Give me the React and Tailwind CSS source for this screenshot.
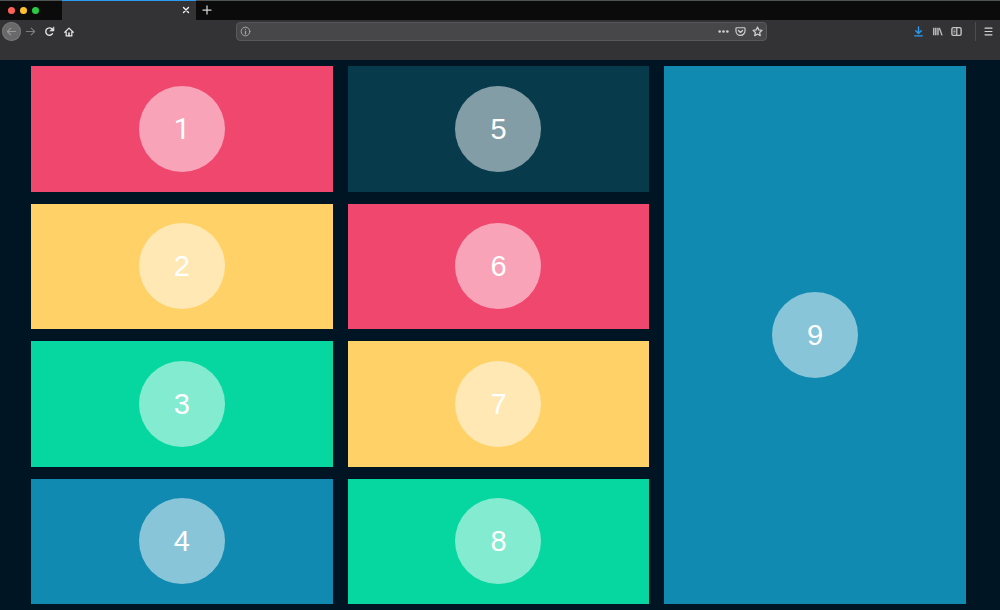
import React from 'react';

const tiles = [
  { n: 1, color: 'bg-[#f0476f]', font: "font-['Roboto',sans-serif]" },
  { n: 2, color: 'bg-[#ffd166]' },
  { n: 3, color: 'bg-[#06d7a0]' },
  { n: 4, color: 'bg-[#118ab2]' },
  { n: 5, color: 'bg-[#073b4c]' },
  { n: 6, color: 'bg-[#f0476f]' },
  { n: 7, color: 'bg-[#ffd166]' },
  { n: 8, color: 'bg-[#06d7a0]' },
  { n: 9, color: 'bg-[#118ab2]', span: 'row-span-4' },
];

function Icon({ children, className = 'size-[11px]' }) {
  return (
    <svg
      viewBox="0 0 16 16"
      className={className}
      fill="none"
      stroke="currentColor"
      strokeWidth="2"
      strokeLinecap="round"
      strokeLinejoin="round"
      aria-hidden="true"
    >
      {children}
    </svg>
  );
}

function ToolButton({ label, className = 'text-[#d4d4d5]', children }) {
  return (
    <button
      type="button"
      aria-label={label}
      className={`flex size-[19px] shrink-0 items-center justify-center rounded-full ${className}`}
    >
      {children}
    </button>
  );
}

function TabStrip() {
  return (
    <div className="flex h-5 border-t border-[#505354] bg-[#0b0b0b]">
      <div className="flex w-[62px] shrink-0 items-center gap-[5px] pb-px pl-2">
        <button type="button" aria-label="Close window" className="size-[7px] rounded-full bg-[#ff6159]" />
        <button type="button" aria-label="Minimize window" className="size-[7px] rounded-full bg-[#ffc12f]" />
        <button type="button" aria-label="Zoom window" className="size-[7px] rounded-full bg-[#2acb42]" />
      </div>
      <div className="-mt-px flex w-[134px] shrink-0 items-center justify-end border-t border-[#2b9cf2] bg-[#333335] pb-px pr-[5px]">
        <button type="button" aria-label="Close tab" className="flex size-[10px] items-center justify-center text-[#f2f2f2]">
          <Icon className="size-2">
            <path d="M3 3l10 10M13 3L3 13" strokeWidth="2.8" />
          </Icon>
        </button>
      </div>
      <button type="button" aria-label="New tab" className="flex w-[21px] items-center justify-center pb-px text-[#d4d4d5]">
        <Icon className="size-[10px]">
          <path d="M8 1.5v13M1.5 8h13" />
        </Icon>
      </button>
    </div>
  );
}

function Toolbar() {
  return (
    <div className="flex h-10 items-start bg-[#333335] pt-0.5">
      <div className="flex h-[19px] w-full items-center pl-0.5 pr-0.5">
        <div className="flex shrink-0 pr-4">
          <ToolButton label="Back" className="bg-[#69696a] text-[#98989a] ring-1 ring-inset ring-[#757576]">
            <Icon>
              <path d="M14 8H2M7 3L2 8l5 5" strokeWidth="1.6" />
            </Icon>
          </ToolButton>
          <ToolButton label="Forward" className="text-[#7d7d7f]">
            <Icon>
              <path d="M2 8h12M9 3l5 5-5 5" strokeWidth="1.6" />
            </Icon>
          </ToolButton>
          <ToolButton label="Reload" className="text-[#e4e4e5]">
            <Icon>
              <path d="M12.4 11.2A5.4 5.4 0 1 1 11.8 4.2" />
              <path d="M14.4 1.8v5.4H9z" fill="currentColor" strokeWidth="1" />
            </Icon>
          </ToolButton>
          <ToolButton label="Home" className="text-[#e4e4e5]">
            <Icon className="size-[10px]">
              <path d="M1.3 8.5L8 1.8l6.7 6.7M3.5 8v6.3h9V8" />
              <path d="M8 9.5V14" strokeWidth="2.6" />
            </Icon>
          </ToolButton>
        </div>

        <div className="mx-auto flex h-[19px] w-full max-w-[531px] items-center rounded-sm border border-[#59595b] bg-[#474749] pl-[3px] pr-[3px] text-[#cfcfd0]">
          <Icon className="size-[11px] shrink-0 text-[#a9a9aa]">
            <circle cx="8" cy="8" r="6.3" strokeWidth="1.4" />
            <path d="M8 7.7v3.6M8 4.8v.1" strokeWidth="1.8" />
          </Icon>
          <input
            type="text"
            aria-label="Address"
            className="h-full min-w-0 flex-1 bg-transparent px-2 font-['Liberation_Sans',sans-serif] text-[11px] text-white outline-none"
          />
          <div className="flex shrink-0 items-center gap-1.5">
            <button type="button" aria-label="Page actions">
              <Icon>
                <g fill="currentColor" stroke="none">
                  <circle cx="2.4" cy="8" r="1.9" />
                  <circle cx="8" cy="8" r="1.9" />
                  <circle cx="13.6" cy="8" r="1.9" />
                </g>
              </Icon>
            </button>
            <button type="button" aria-label="Save to Pocket">
              <Icon>
                <path d="M2.6 2.5h10.8a1.2 1.2 0 0 1 1.2 1.2V7a6.6 6.6 0 0 1-13.2 0V3.7a1.2 1.2 0 0 1 1.2-1.2z" strokeWidth="1.7" />
                <path d="M5 6.5l3 2.8 3-2.8" />
              </Icon>
            </button>
            <button type="button" aria-label="Bookmark this page">
              <Icon>
                <path d="M8 1.6l1.9 4.2 4.6.5-3.4 3.1.9 4.6L8 11.7 4 14l.9-4.6-3.4-3.1 4.6-.5z" strokeWidth="1.8" />
              </Icon>
            </button>
          </div>
        </div>

        <div className="flex shrink-0 items-center">
          <ToolButton label="Downloads" className="text-[#2b9cf2]">
            <Icon>
              <path d="M8 1.5v9M4 7l4 4 4-4M2.5 14.3h11" />
            </Icon>
          </ToolButton>
          <ToolButton label="Library" className="text-[#b9b9ba]">
            <Icon>
              <path d="M2.5 2.5v11M5.5 2.5v11M8.7 2.5v11" strokeLinecap="butt" strokeWidth="2.2" />
              <path d="M11 3.5l3.4 9.5" />
            </Icon>
          </ToolButton>
          <ToolButton label="Sidebars" className="text-[#c5c5c6]">
            <Icon>
              <rect x="1.3" y="2.3" width="13.4" height="11.4" rx="2" />
              <path d="M8.4 3v10" strokeWidth="1.8" />
              <path d="M4 5.8h2M4 8h2M4 10.2h2" strokeWidth="1.1" />
            </Icon>
          </ToolButton>
          <div className="ml-[9px] mr-[3px] h-[19px] w-px bg-[#4d4d4f]" />
          <ToolButton label="Menu">
            <Icon>
              <path d="M3 3.2h10M3 8h10M3 12.8h10" strokeWidth="1.8" />
            </Icon>
          </ToolButton>
        </div>
      </div>
    </div>
  );
}

function Tile({ n, color, span = '', font = '' }) {
  return (
    <section className={`flex items-center justify-center py-4 ${color} ${span}`}>
      <div
        className={`flex size-[86px] items-center justify-center rounded-full bg-white/50 text-[29px] leading-8 text-white ${font}`}
      >
        {n}
      </div>
    </section>
  );
}

export default function App() {
  return (
    <div className="flex min-h-screen flex-col bg-[#001524] font-['Liberation_Sans',Arial,sans-serif]">
      <header>
        <TabStrip />
        <Toolbar />
      </header>
      <main className="grid flex-1 grid-flow-col grid-cols-3 grid-rows-4 gap-x-[15px] gap-y-3 pb-1.5 pl-[31px] pr-[34px] pt-1.5">
        {tiles.map((tile) => (
          <Tile key={tile.n} {...tile} />
        ))}
      </main>
    </div>
  );
}
